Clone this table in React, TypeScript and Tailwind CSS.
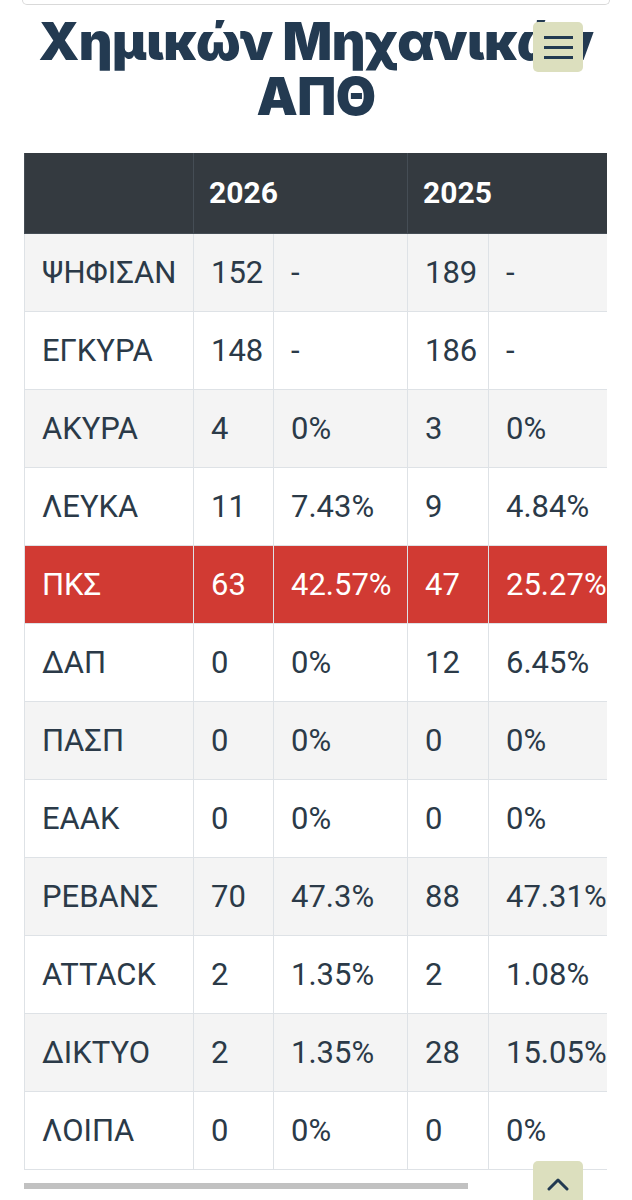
import React from 'react';

type Row = {
  name: string;
  a: string;
  ap: string;
  b: string;
  bp: string;
  highlight?: boolean;
};

const rows: Row[] = [
  { name: 'ΨΗΦΙΣΑΝ', a: '152', ap: '-', b: '189', bp: '-' },
  { name: 'ΕΓΚΥΡΑ', a: '148', ap: '-', b: '186', bp: '-' },
  { name: 'ΑΚΥΡΑ', a: '4', ap: '0%', b: '3', bp: '0%' },
  { name: 'ΛΕΥΚΑ', a: '11', ap: '7.43%', b: '9', bp: '4.84%' },
  { name: 'ΠΚΣ', a: '63', ap: '42.57%', b: '47', bp: '25.27%', highlight: true },
  { name: 'ΔΑΠ', a: '0', ap: '0%', b: '12', bp: '6.45%' },
  { name: 'ΠΑΣΠ', a: '0', ap: '0%', b: '0', bp: '0%' },
  { name: 'ΕΑΑΚ', a: '0', ap: '0%', b: '0', bp: '0%' },
  { name: 'ΡΕΒΑΝΣ', a: '70', ap: '47.3%', b: '88', bp: '47.31%' },
  { name: 'ATTACK', a: '2', ap: '1.35%', b: '2', bp: '1.08%' },
  { name: 'ΔΙΚΤΥΟ', a: '2', ap: '1.35%', b: '28', bp: '15.05%' },
  { name: 'ΛΟΙΠΑ', a: '0', ap: '0%', b: '0', bp: '0%' },
];

const cell = 'border border-[#dee2e6] px-[17px] py-[18px] h-[78px] text-left font-normal whitespace-nowrap';
const head = 'border border-[#454d55] border-t-0 px-[15px] py-[19px] h-[80px] text-left font-bold';

export default function App() {
  return (
    <div className="relative w-[632px] h-[1200px] overflow-hidden bg-white">
      {/* bottom edge of the search box above */}
      <div className="mx-[22px] h-[5px] rounded-b-[6px] border border-t-0 border-[#d9d9d9]" />

      {/* τίτλος */}
      <h1
        className="mt-[9px] text-center font-black text-[52px] leading-[55px] text-[#233a51] whitespace-nowrap tracking-[-0.5px]"
        style={{ fontFamily: 'Inter, "Noto Sans", sans-serif' }}
      >
        Χημικών Μηχανικών
        <br />
        ΑΠΘ
      </h1>

      {/* πίνακας αποτελεσμάτων */}
      <div className="mt-[29px] ml-[24px] w-[583px] overflow-hidden">
        <table
          className="table-fixed border-collapse w-[766px] text-[31px] leading-[41px] text-[#2b3a48]"
          style={{ fontFamily: 'Roboto, "Noto Sans", sans-serif' }}
        >
          <colgroup>
            <col className="w-[169px]" />
            <col className="w-[80px]" />
            <col className="w-[134px]" />
            <col className="w-[81px]" />
            <col className="w-[302px]" />
          </colgroup>
          <thead>
            <tr className="bg-[#343a40] text-white text-[30px]">
              <th className={head} />
              <th colSpan={2} className={head}>
                2026
              </th>
              <th colSpan={2} className={head}>
                2025
              </th>
            </tr>
          </thead>
          <tbody className="font-light">
            {rows.map((r, i) => {
              const bg = r.highlight
                ? 'bg-[#d13a33] text-white'
                : i % 2 === 0
                  ? 'bg-[#f4f4f4]'
                  : 'bg-white';
              return (
                <tr key={r.name} className={bg}>
                  <td className={cell}>{r.name}</td>
                  <td className={cell}>{r.a}</td>
                  <td className={cell}>{r.ap}</td>
                  <td className={cell}>{r.b}</td>
                  <td className={cell}>{r.bp}</td>
                </tr>
              );
            })}
          </tbody>
        </table>
      </div>

      {/* scrollbar */}
      <div className="ml-[24px] mt-[13px] w-[583px] h-[6px]">
        <div className="w-[444px] h-[6px] bg-[#c1c1c1]" />
      </div>

      {/* μενού */}
      <button className="absolute left-[533px] top-[22px] w-[50px] h-[50px] rounded-[5px] bg-[#dcdfbe] flex flex-col items-center justify-center gap-[7px]">
        <span className="block w-[29px] h-[3px] bg-[#223a51]" />
        <span className="block w-[29px] h-[3px] bg-[#223a51]" />
        <span className="block w-[29px] h-[3px] bg-[#223a51]" />
      </button>

      {/* πάνω */}
      <button className="absolute left-[533px] top-[1161px] w-[50px] h-[50px] rounded-[5px] bg-[#dcdfbe] flex justify-center pt-[16px]">
        <svg width="24" height="14" viewBox="0 0 24 14" fill="none">
          <path d="M3 12 L12 3 L21 12" stroke="#223a51" strokeWidth="3" strokeLinecap="round" strokeLinejoin="round" />
        </svg>
      </button>
    </div>
  );
}
